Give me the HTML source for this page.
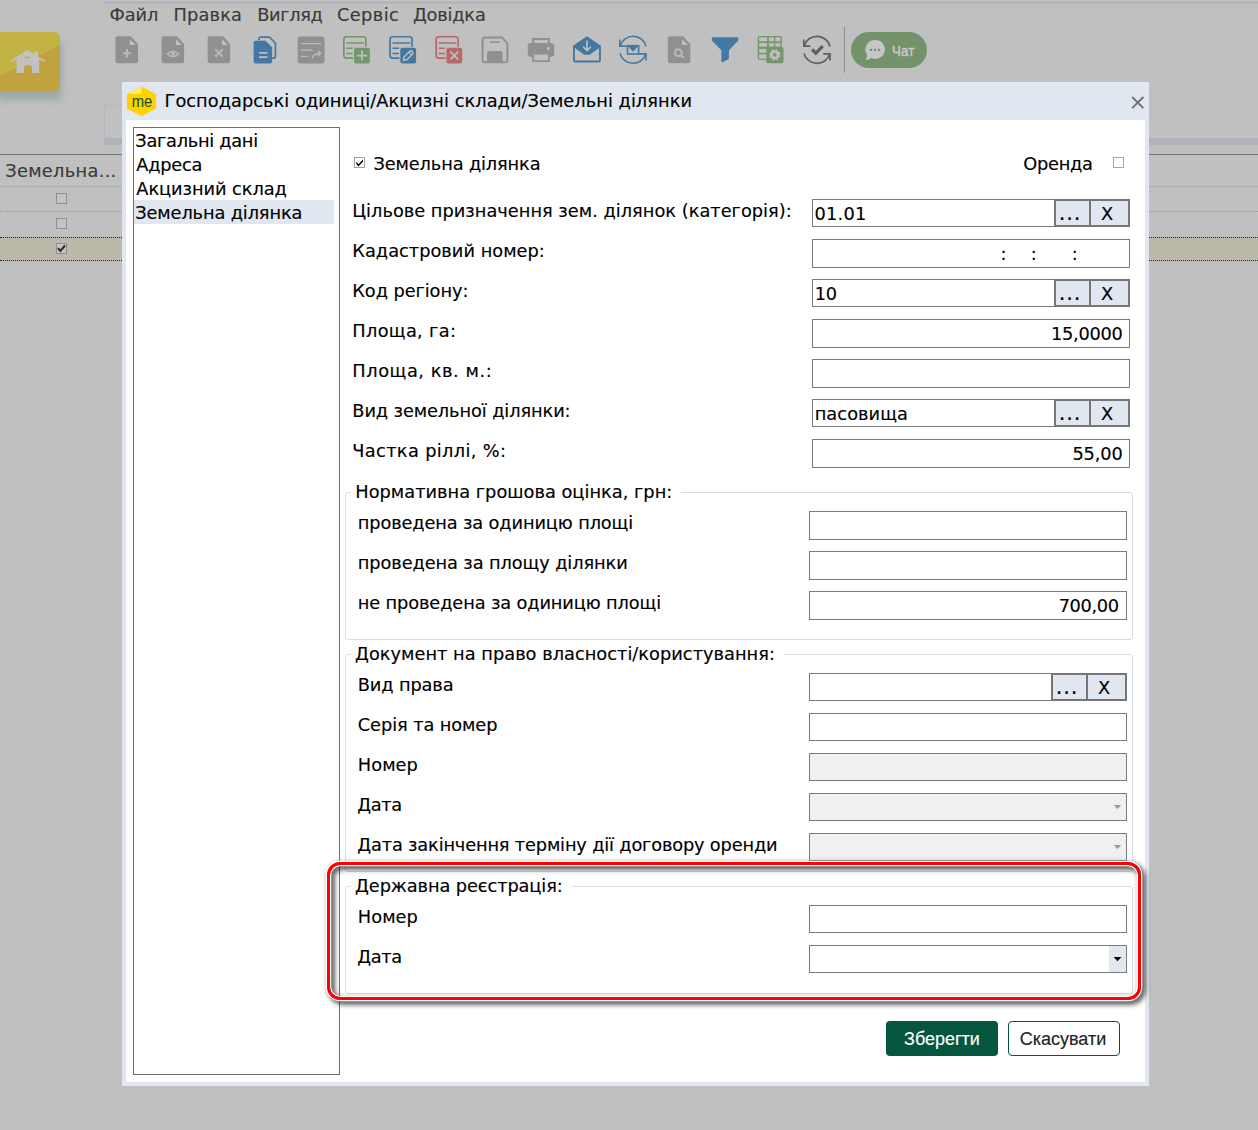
<!DOCTYPE html>
<html lang="uk">
<head>
<meta charset="utf-8">
<title>Земельні ділянки</title>
<style>
html,body{margin:0;padding:0;}
body{width:1258px;height:1130px;position:relative;overflow:hidden;background:#c0c0c0;font-family:"DejaVu Sans","Liberation Sans",sans-serif;font-size:17.78px;letter-spacing:0;color:#000;-webkit-text-stroke:0.15px currentColor;}
.abs{position:absolute;}
.t{position:absolute;white-space:nowrap;line-height:24px;height:24px;}
#topstrip{left:104px;top:0;width:1154px;height:4px;background:#b2b5bb;border-top:1px solid #c5c5c8;box-sizing:border-box;}
.menu{color:#3a3a3a;}
#dlg{left:122px;top:82px;width:1027px;height:1004px;background:#e1e7f0;}
#dlgin{left:126px;top:120px;width:1019px;height:962px;background:#fff;}
#list{left:133px;top:127px;width:205px;height:946px;border:1px solid #6f6f6f;background:#fff;}
.inp{position:absolute;box-sizing:border-box;border:1px solid #7a7a7a;background:#fff;}
.dis{background:#f0f0f0;}
.btn{position:absolute;box-sizing:border-box;border:2px solid #767676;background:#e1e7f0;text-align:center;line-height:24px;}
.btn .dots{position:relative;top:0.3px;left:-2.5px;font-size:21px;letter-spacing:0.8px;}
.btn .bx{position:relative;top:0.8px;left:-2.5px;}
.val{position:absolute;white-space:nowrap;line-height:24px;}
.fs{position:absolute;box-sizing:border-box;border:1px solid #d5dde5;border-radius:3px;}
.lg{position:absolute;white-space:nowrap;line-height:24px;background:#fff;padding:0 9px 0 4px;}
</style>
</head>
<body>
<div id="topstrip" class="abs"></div>

<div class="t menu" style="left:109.5px;top:3px;letter-spacing:-0.042px;">Файл</div>
<div class="t menu" style="left:173.6px;top:3px;letter-spacing:0.135px;">Правка</div>
<div class="t menu" style="left:257.2px;top:3px;letter-spacing:-0.350px;">Вигляд</div>
<div class="t menu" style="left:336.9px;top:3px;letter-spacing:0.416px;">Сервіс</div>
<div class="t menu" style="left:412.9px;top:3px;letter-spacing:-0.195px;">Довідка</div>
<!-- home button -->
<div class="abs" style="left:-6px;top:32px;width:66px;height:59px;border-radius:6px;background:linear-gradient(153deg,#c2b342 0,#c2b342 50%,#c0a23f 50.5%,#c0a23f 100%);box-shadow:2px 9px 7px rgba(130,150,155,.55);"></div>
<svg class="abs" style="left:10px;top:48px" width="36" height="26" viewBox="0 0 36 26"><path d="M1 12.3 L17.5 2 L24 6 L24 3.4 L28 3.4 L28 8.5 L35 12.6 L34 14 L29.2 11.3 L29.2 25 L22 25 L22 18.5 Q17.8 15 14 18.5 L14 25 L6.5 25 L6.5 11.3 L2 14 Z M13.8 9.5 Q17.5 7.4 21.2 9.5 Q17.5 11.6 13.8 9.5 Z" fill="#c2c2c2" fill-rule="evenodd"/></svg>
<!-- tab box behind dialog -->
<div class="abs" style="left:104px;top:105px;width:60px;height:33px;border:1px solid #b4b8c0;border-bottom:none;background:#c0c0c0;box-sizing:border-box"></div>
<div class="abs" style="left:104px;top:138px;width:1154px;height:7px;background:#b0b3b9;"></div>
<!-- grid behind -->
<div class="abs" style="left:0;top:154px;width:1258px;height:1px;background:#747474;"></div>
<div class="abs" style="left:0;top:186px;width:1258px;height:1px;background:#a9b0b6;"></div>
<div class="abs" style="left:0;top:211px;width:1258px;height:0;border-top:1px dotted #9a9a9a;"></div>
<div class="abs" style="left:0;top:237px;width:1258px;height:22px;background:#bdb9aa;border-top:1px dotted #222;border-bottom:1px dotted #222;"></div>
<div class="abs" style="left:56px;top:193px;width:9px;height:9px;border:1px solid #8f8f8f;background:#c4c4c4;"></div>
<div class="abs" style="left:56px;top:218px;width:9px;height:9px;border:1px solid #8f8f8f;background:#c4c4c4;"></div>
<div class="abs" style="left:56px;top:243px;width:9px;height:9px;border:1px solid #8f8f8f;background:#c4c4c4;"></div>
<svg class="abs" style="left:57px;top:244px" width="9" height="9" viewBox="0 0 9 9"><path d="M1 4.2 L3.4 7 L8 1.5" fill="none" stroke="#2a2a2a" stroke-width="2"/></svg>

<div class="t" style="left:5.2px;top:159px;letter-spacing:0.313px;color:#3a3a3a;">Земельна...</div>
<svg class="abs" style="left:100px;top:25px" width="840" height="50" viewBox="100 25 840 50">
<path d="M117.5,36.3 H130.8 L138.0,44.0 V61.3 Q138.0,63.3 136.0,63.3 H117.5 Q115.5,63.3 115.5,61.3 V38.3 Q115.5,36.3 117.5,36.3 Z" fill="#909090"/><path d="M129.8,39.3 V45.0 H135.7 Z" fill="#c0c0c0"/>
<path d="M127,49 V57.4 M122.9,53.2 H131.1" stroke="#b9b9b9" stroke-width="2.1" fill="none"/>
<path d="M163.6,36.3 H176.9 L184.1,44.0 V61.3 Q184.1,63.3 182.1,63.3 H163.6 Q161.6,63.3 161.6,61.3 V38.3 Q161.6,36.3 163.6,36.3 Z" fill="#909090"/><path d="M175.9,39.3 V45.0 H181.79999999999998 Z" fill="#c0c0c0"/>
<path d="M167.3,54 Q173,48.6 178.7,54 Q173,59.4 167.3,54 Z" stroke="#b9b9b9" stroke-width="1.5" fill="none"/><circle cx="173" cy="54" r="2" fill="#b9b9b9"/>
<path d="M209.7,36.3 H223.0 L230.2,44.0 V61.3 Q230.2,63.3 228.2,63.3 H209.7 Q207.7,63.3 207.7,61.3 V38.3 Q207.7,36.3 209.7,36.3 Z" fill="#909090"/><path d="M222.0,39.3 V45.0 H227.89999999999998 Z" fill="#c0c0c0"/>
<path d="M215.2,49.2 L222.8,56.8 M222.8,49.2 L215.2,56.8" stroke="#b9b9b9" stroke-width="2" fill="none"/>
<path d="M260.3,37.2 H269.5 L275.4,43.2 V56.2 Q275.4,58.2 273.4,58.2 H272" stroke="#4577a3" stroke-width="1.7" fill="none" stroke-linejoin="round"/>
<path d="M260.3,37.2 Q258.8,37.4 258.7,40.5" stroke="#4577a3" stroke-width="1.7" fill="none"/>
<path d="M255.6,40.7 H265.5 L272.1,47.3 V61.5 Q272.1,63.5 270.1,63.5 H255.6 Q253.6,63.5 253.6,61.5 V42.7 Q253.6,40.7 255.6,40.7 Z" fill="#4577a3"/>
<path d="M259,52.9 H267.4 M259,57.2 H267.4" stroke="#c0c0c0" stroke-width="1.8" fill="none"/>
<rect x="297.6" y="36.4" width="26.9" height="27.1" rx="3" fill="#909090"/>
<path d="M300.9,43.7 H321.2 M300.9,50 H312.7 M300.9,56.3 H308.4" stroke="#b9b9b9" stroke-width="1.3" fill="none"/>
<path d="M312.3,58.3 Q313.6,53.5 320,53.5" stroke="#b9b9b9" stroke-width="1.7" fill="none"/><path d="M317.9,51 L320.8,53.5 L317.9,56" stroke="#b9b9b9" stroke-width="1.6" fill="none"/>
<rect x="343.85" y="36.75" width="22" height="21.4" rx="2.6" fill="none" stroke="#73966c" stroke-width="1.7"/><path d="M346.3,42.9 H364 M346.3,48.2 H352.7 M346.3,53.6 H352.7" stroke="#73966c" stroke-width="1.5" fill="none"/><rect x="353.2" y="46.8" width="17.7" height="17.7" rx="2.2" fill="#c0c0c0"/><rect x="354.1" y="47.7" width="15.8" height="15.8" rx="2" fill="#73966c"/><path d="M362,50.6 V60.6 M357,55.6 H367" stroke="#c0c0c0" stroke-width="1.7" fill="none"/>
<rect x="390.05" y="36.75" width="22" height="21.4" rx="2.6" fill="none" stroke="#4577a3" stroke-width="1.7"/><path d="M392.5,42.9 H410.2 M392.5,48.2 H398.9 M392.5,53.6 H398.9" stroke="#4577a3" stroke-width="1.5" fill="none"/><rect x="399.4" y="46.8" width="17.7" height="17.7" rx="2.2" fill="#c0c0c0"/><rect x="400.3" y="47.7" width="15.8" height="15.8" rx="2" fill="#4577a3"/><path d="M403.59999999999997,60.4 L404.0,57.0 L409.8,51.2 Q410.8,50.4 411.8,51.300000000000004 L412.59999999999997,52.1 Q413.4,53.1 412.59999999999997,54.0 L406.9,59.800000000000004 Z" fill="none" stroke="#c0c0c0" stroke-width="1.4" stroke-linejoin="round"/><path d="M408.8,52.2 L411.59999999999997,55.0" stroke="#c0c0c0" stroke-width="1.2" fill="none"/>
<rect x="436.15000000000003" y="36.75" width="22" height="21.4" rx="2.6" fill="none" stroke="#b5696a" stroke-width="1.7"/><path d="M438.6,42.9 H456.3 M438.6,48.2 H445.0 M438.6,53.6 H445.0" stroke="#b5696a" stroke-width="1.5" fill="none"/><rect x="445.5" y="46.8" width="17.7" height="17.7" rx="2.2" fill="#c0c0c0"/><rect x="446.40000000000003" y="47.7" width="15.8" height="15.8" rx="2" fill="#b5696a"/><path d="M450.3,51.6 L458.3,59.6 M458.3,51.6 L450.3,59.6" stroke="#c0c0c0" stroke-width="1.6" fill="none"/>
<path d="M484,37.4 H502 L507.4,43.4 V60.3 Q507.4,62.3 505.4,62.3 H484.6 Q482.6,62.3 482.6,60.3 V39.4 Q482.6,37.4 484.6,37.4 Z" fill="none" stroke="#909090" stroke-width="2" stroke-linejoin="round"/>
<path d="M487,62.3 V53.9 Q487,50.9 490,50.9 H499.7 Q502.7,50.9 502.7,53.9 V62.3 Z" fill="#909090"/>
<path d="M489.8,42.1 H499.5" stroke="#909090" stroke-width="1.6" fill="none"/>
<rect x="533.2" y="39" width="15.7" height="6" fill="none" stroke="#909090" stroke-width="2"/>
<rect x="527.7" y="42.9" width="26.5" height="13.9" rx="3" fill="#909090"/>
<rect x="532.2" y="53" width="17.7" height="9" fill="#909090"/><rect x="534.1" y="54.6" width="13.9" height="5.6" fill="#c0c0c0"/>
<circle cx="548.3" cy="48.5" r="1.4" fill="#c0c0c0"/>
<path d="M586.2,36.8 Q587,36.2 587.8,36.8 L600.9,45.8 V60.6 Q600.9,62.4 599.1,62.4 H574.8 Q573,62.4 573,60.6 V45.8 Z" fill="#4577a3"/>
<path d="M574.9,48 L584.3,54.8 H589.6 L599,48 V60.5 H574.9 Z" fill="#c0c0c0"/>
<path d="M587,40.5 V50.3 M583.2,46.8 L587,50.6 L590.8,46.8" stroke="#c0c0c0" stroke-width="1.6" fill="none"/>
<path d="M646.07,46.42 A13.5,13.5 0 0 0 620.12,45.74" stroke="#4577a3" stroke-width="1.6" fill="none"/><path d="M619.82,39.54 V46.14 H626.52" stroke="#4577a3" stroke-width="1.6" fill="none"/><path d="M619.99,53.41 A13.5,13.5 0 0 0 645.73,54.31" stroke="#4577a3" stroke-width="1.6" fill="none"/><path d="M646.03,60.51 V53.91 H639.13" stroke="#4577a3" stroke-width="1.6" fill="none"/>
<rect x="627.5" y="45.7" width="11.1" height="8.3" fill="none" stroke="#4577a3" stroke-width="1.6"/><path d="M627.5,45.7 H638.6 L633.05,51.7 Z" fill="#4577a3"/>
<path d="M669.8,36.3 H683.0999999999999 L690.3,44.0 V61.3 Q690.3,63.3 688.3,63.3 H669.8 Q667.8,63.3 667.8,61.3 V38.3 Q667.8,36.3 669.8,36.3 Z" fill="#909090"/><path d="M682.0999999999999,39.3 V45.0 H688.0 Z" fill="#c0c0c0"/>
<circle cx="678.4" cy="52.7" r="3.4" fill="none" stroke="#b9b9b9" stroke-width="2"/><path d="M681,55.3 L683.9,58.1" stroke="#b9b9b9" stroke-width="2" fill="none"/>
<path d="M713,37.3 H737 Q738.3,37.3 738.3,38.6 V39.5 Q738.3,40.3 737.8,40.9 L728.9,50.3 V59 L722.6,62.2 Q721.4,62.6 721.4,61.3 V50.3 L712.3,40.9 Q711.8,40.3 711.8,39.5 V38.6 Q711.8,37.3 713,37.3 Z" fill="#4577a3"/>
<rect x="757.7" y="35.9" width="24.1" height="23.9" rx="1.5" fill="#73966c"/>
<rect x="759.1" y="37.3" width="8.0" height="4.0" fill="#c0c0c0"/>
<rect x="759.1" y="43.1" width="8.0" height="3.5" fill="#c0c0c0"/>
<rect x="759.1" y="48.9" width="8.0" height="3.9" fill="#c0c0c0"/>
<rect x="759.1" y="54.4" width="8.0" height="4.3" fill="#c0c0c0"/>
<rect x="768.9" y="37.3" width="5.0" height="4.0" fill="#c0c0c0"/>
<rect x="768.9" y="43.1" width="5.0" height="3.5" fill="#c0c0c0"/>
<rect x="768.9" y="48.9" width="5.0" height="3.9" fill="#c0c0c0"/>
<rect x="768.9" y="54.4" width="5.0" height="4.3" fill="#c0c0c0"/>
<rect x="775.3" y="37.3" width="5.2" height="4.0" fill="#c0c0c0"/>
<rect x="775.3" y="43.1" width="5.2" height="3.5" fill="#c0c0c0"/>
<rect x="775.3" y="48.9" width="5.2" height="3.9" fill="#c0c0c0"/>
<rect x="775.3" y="54.4" width="5.2" height="4.3" fill="#c0c0c0"/>
<rect x="766.3" y="47" width="17.2" height="16.3" rx="1.8" fill="#73966c"/>
<circle cx="774.8" cy="54.8" r="3.3" fill="none" stroke="#c0c0c0" stroke-width="2.7"/><circle cx="774.8" cy="54.8" r="5.1" fill="none" stroke="#c0c0c0" stroke-width="1.2" stroke-dasharray="2.2 1.805"/>
<path d="M830.07,46.42 A13.5,13.5 0 0 0 804.12,45.74" stroke="#5f5f5f" stroke-width="1.7" fill="none"/><path d="M803.82,39.54 V46.14 H810.52" stroke="#5f5f5f" stroke-width="1.7" fill="none"/><path d="M803.99,53.41 A13.5,13.5 0 0 0 829.73,54.31" stroke="#5f5f5f" stroke-width="1.7" fill="none"/><path d="M830.03,60.51 V53.91 H823.13" stroke="#5f5f5f" stroke-width="1.7" fill="none"/>
<path d="M812.1,49.4 L815.8,53.1 L822.8,46.1" stroke="#5f5f5f" stroke-width="3.3" fill="none"/>
<rect x="843.9" y="27" width="1" height="45.6" fill="#8b8b8b"/>
<rect x="851" y="32" width="76" height="36" rx="18" fill="#74936b"/>
<path d="M875.1,39.9 A9.8,9.5 0 1 1 871.2,58.1 Q868.6,60.2 865.5,59.6 Q867.6,57.4 867,54.6 A9.8,9.5 0 0 1 875.1,39.9 Z" fill="#c6c6c6"/>
<rect x="869.9" y="48.8" width="2.2" height="2.2" fill="#74936b"/><rect x="873.9" y="48.8" width="2.2" height="2.2" fill="#74936b"/><rect x="877.9" y="48.8" width="2.2" height="2.2" fill="#74936b"/>
<text x="892.1" y="55.7" textLength="22.3" lengthAdjust="spacingAndGlyphs" font-family="Liberation Sans, sans-serif" font-size="14.4" fill="#cdcdcd" stroke="#cdcdcd" stroke-width="0.35" style="-webkit-text-stroke:0">Чат</text>
</svg>

<div id="dlg" class="abs"></div>
<div id="dlgin" class="abs"></div>
<svg class="abs" style="left:122px;top:82px" width="40" height="40" viewBox="122 82 40 40">
<polygon points="141.5,87.3 155.7,94.4 155.7,108.2 141.5,115.7 127.3,108.2 127.3,94.4" fill="#ffd200" stroke="#ffd200" stroke-width="1" stroke-linejoin="round"/>
<polygon points="141.5,87.3 141.5,93.8 128,93.8" fill="#ffee66"/>
<text x="131.7" y="107" textLength="20.6" lengthAdjust="spacingAndGlyphs" font-family="Liberation Sans, sans-serif" font-size="16.4" fill="#0f5132" style="-webkit-text-stroke:0">me</text>
</svg>
<svg class="abs" style="left:1130px;top:94.6px" width="15" height="15" viewBox="0 0 15 15"><path d="M2.2 2 L13.4 13.2 M13.4 2 L2.2 13.2" stroke="#6e6e6e" stroke-width="1.8" fill="none"/></svg>

<div class="t" style="left:164.5px;top:89px;letter-spacing:0.041px;">Господарські одиниці/Акцизні склади/Земельні ділянки</div>
<div id="list" class="abs"></div>
<div class="abs" style="left:134px;top:200px;width:200px;height:24px;background:#e1e7f0;"></div>
<div class="t" style="left:135.3px;top:129px;letter-spacing:-0.284px;">Загальні дані</div>
<div class="t" style="left:136.3px;top:153px;letter-spacing:-0.262px;">Адреса</div>
<div class="t" style="left:136.3px;top:177px;letter-spacing:-0.066px;">Акцизний склад</div>
<div class="t" style="left:135.3px;top:201px;letter-spacing:-0.136px;">Земельна ділянка</div>
<div class="abs" style="left:354px;top:157px;width:9px;height:9px;border:1px solid #a0a0a0;background:#fff;"></div>
<svg class="abs" style="left:354px;top:157px" width="11" height="11" viewBox="0 0 11 11"><path d="M2.3 4.6 V7 L4.4 9.4 L9 4.6 V2.6 L4.4 7.2 Z" fill="#000"/></svg>
<div class="t" style="left:373.5px;top:152px;letter-spacing:-0.136px;">Земельна ділянка</div>
<div class="t" style="left:1023.2px;top:152px;letter-spacing:-0.238px;">Оренда</div>
<div class="abs" style="left:1113px;top:157px;width:9px;height:9px;border:1px solid #a6a6a6;background:#fff;"></div>
<div class="t" style="left:352.3px;top:199px;letter-spacing:0.011px;">Цільове призначення зем. ділянок (категорія):</div>
<div class="inp" style="left:812px;top:199px;width:243px;height:28px;"></div>
<div class="btn" style="left:1054px;top:199px;width:37px;height:28px;"><span class="dots">...</span></div><div class="btn" style="left:1089px;top:199px;width:41px;height:28px;"><span class="bx">X</span></div>
<div class="val" style="left:814.6px;top:202px;letter-spacing:0.186px;">01.01</div>
<div class="t" style="left:352.3px;top:239px;letter-spacing:0.016px;">Кадастровий номер:</div>
<div class="inp" style="left:812px;top:239px;width:318px;height:29px;"></div>
<div class="t" style="left:352.3px;top:279px;letter-spacing:-0.072px;">Код регіону:</div>
<div class="inp" style="left:812px;top:279px;width:243px;height:28px;"></div>
<div class="btn" style="left:1054px;top:279px;width:37px;height:28px;"><span class="dots">...</span></div><div class="btn" style="left:1089px;top:279px;width:41px;height:28px;"><span class="bx">X</span></div>
<div class="val" style="left:814.7px;top:282px;letter-spacing:-0.350px;">10</div>
<div class="t" style="left:352.3px;top:319px;letter-spacing:0.320px;">Площа, га:</div>
<div class="inp" style="left:812px;top:319px;width:318px;height:29px;"></div>
<div class="val" style="right:135.4000000000001px;top:322px;letter-spacing:-0.260px;">15,0000</div>
<div class="t" style="left:352.3px;top:359px;letter-spacing:0.566px;">Площа, кв. м.:</div>
<div class="inp" style="left:812px;top:359px;width:318px;height:29px;"></div>
<div class="t" style="left:352.3px;top:399px;letter-spacing:-0.101px;">Вид земельної ділянки:</div>
<div class="inp" style="left:812px;top:399px;width:243px;height:28px;"></div>
<div class="btn" style="left:1054px;top:399px;width:37px;height:28px;"><span class="dots">...</span></div><div class="btn" style="left:1089px;top:399px;width:41px;height:28px;"><span class="bx">X</span></div>
<div class="val" style="left:814.7px;top:402px;letter-spacing:0.059px;">пасовища</div>
<div class="t" style="left:352.3px;top:439px;letter-spacing:0.348px;">Частка ріллі, %:</div>
<div class="inp" style="left:812px;top:439px;width:318px;height:29px;"></div>
<div class="val" style="right:135.4000000000001px;top:442px;letter-spacing:-0.139px;">55,00</div>
<div class="val" style="left:1000.6px;top:242px">:</div>
<div class="val" style="left:1030.8px;top:242px">:</div>
<div class="val" style="left:1071.8px;top:242px">:</div>
<div class="fs" style="left:345px;top:492px;width:788px;height:148px;"></div>
<div class="lg" style="left:351.3px;top:480px;letter-spacing:0.014px;">Нормативна грошова оцінка, грн:</div>
<div class="t" style="left:357.8px;top:511px;letter-spacing:-0.129px;">проведена за одиницю площі</div>
<div class="inp" style="left:809px;top:511px;width:318px;height:29px;"></div>
<div class="t" style="left:357.8px;top:551px;letter-spacing:-0.098px;">проведена за площу ділянки</div>
<div class="inp" style="left:809px;top:551px;width:318px;height:29px;"></div>
<div class="t" style="left:357.8px;top:591px;letter-spacing:-0.122px;">не проведена за одиницю площі</div>
<div class="inp" style="left:809px;top:591px;width:318px;height:29px;"></div>
<div class="val" style="right:139.20000000000005px;top:594px;letter-spacing:-0.332px;">700,00</div>
<div class="fs" style="left:345px;top:654px;width:788px;height:218px;"></div>
<div class="lg" style="left:351px;top:642px;letter-spacing:0.018px;">Документ на право власності/користування:</div>
<div class="t" style="left:357.8px;top:673px;letter-spacing:-0.127px;">Вид права</div>
<div class="inp" style="left:809px;top:673px;width:243px;height:28px;"></div>
<div class="btn" style="left:1051px;top:673px;width:37px;height:28px;"><span class="dots">...</span></div><div class="btn" style="left:1086px;top:673px;width:41px;height:28px;"><span class="bx">X</span></div>
<div class="t" style="left:357.8px;top:713px;letter-spacing:-0.091px;">Серія та номер</div>
<div class="inp" style="left:809px;top:713px;width:318px;height:28px;"></div>
<div class="t" style="left:357.8px;top:753px;letter-spacing:0.060px;">Номер</div>
<div class="inp dis" style="left:809px;top:753px;width:318px;height:28px;"></div>
<div class="t" style="left:357.3px;top:793px;letter-spacing:-0.350px;">Дата</div>
<div class="inp dis" style="left:809px;top:793px;width:318px;height:28px;"></div>
<svg class="abs" style="left:1113px;top:805px" width="9" height="5" viewBox="0 0 9 5"><polygon points="0.7,0 8.2,0 4.45,4.1" fill="#9a9a9a"/></svg>
<div class="t" style="left:357.3px;top:833px;letter-spacing:-0.170px;">Дата закінчення терміну дії договору оренди</div>
<div class="inp dis" style="left:809px;top:833px;width:318px;height:28px;"></div>
<svg class="abs" style="left:1113px;top:845px" width="9" height="5" viewBox="0 0 9 5"><polygon points="0.7,0 8.2,0 4.45,4.1" fill="#9a9a9a"/></svg>
<div class="fs" style="left:345px;top:886px;width:788px;height:108px;"></div>
<div class="lg" style="left:351px;top:874px;letter-spacing:-0.092px;">Державна реєстрація:</div>
<div class="t" style="left:357.8px;top:905px;letter-spacing:0.060px;">Номер</div>
<div class="inp" style="left:809px;top:905px;width:318px;height:28px;"></div>
<div class="t" style="left:357.3px;top:945px;letter-spacing:-0.350px;">Дата</div>
<div class="inp" style="left:809px;top:945px;width:318px;height:28px;"></div>
<div class="abs" style="left:1109px;top:946px;width:17px;height:26px;background:#e2e7f0;"></div>
<svg class="abs" style="left:1113px;top:956px" width="9" height="6" viewBox="0 0 9 6"><polygon points="0.6,1 8.4,1 4.5,5.2" fill="#000"/></svg>
<!-- red highlight -->
<div class="abs" style="left:327px;top:862px;width:814px;height:138px;box-sizing:border-box;border:3px solid #fe0000;border-radius:13px;box-shadow:0 0 0 1.3px #fff, inset 0 0 0 1.3px #fff;filter:drop-shadow(3px 3px 2.5px rgba(0,0,0,.7)) drop-shadow(0 0 2px rgba(0,0,0,.15));"></div>
<!-- buttons -->
<div class="abs" style="left:886px;top:1021px;width:112px;height:35px;box-sizing:border-box;border-radius:4px;background:#06563f;color:#fff;font-family:'Liberation Sans',sans-serif;font-size:18px;letter-spacing:0;line-height:36px;text-align:center;">Зберегти</div>
<div class="abs" style="left:1008px;top:1021px;width:112px;height:35px;box-sizing:border-box;border-radius:4px;border:1px solid #06563f;background:#fff;color:#222;font-family:'Liberation Sans',sans-serif;font-size:18px;letter-spacing:0;line-height:34px;text-align:center;padding-right:2px;">Скасувати</div>

</body>
</html>
